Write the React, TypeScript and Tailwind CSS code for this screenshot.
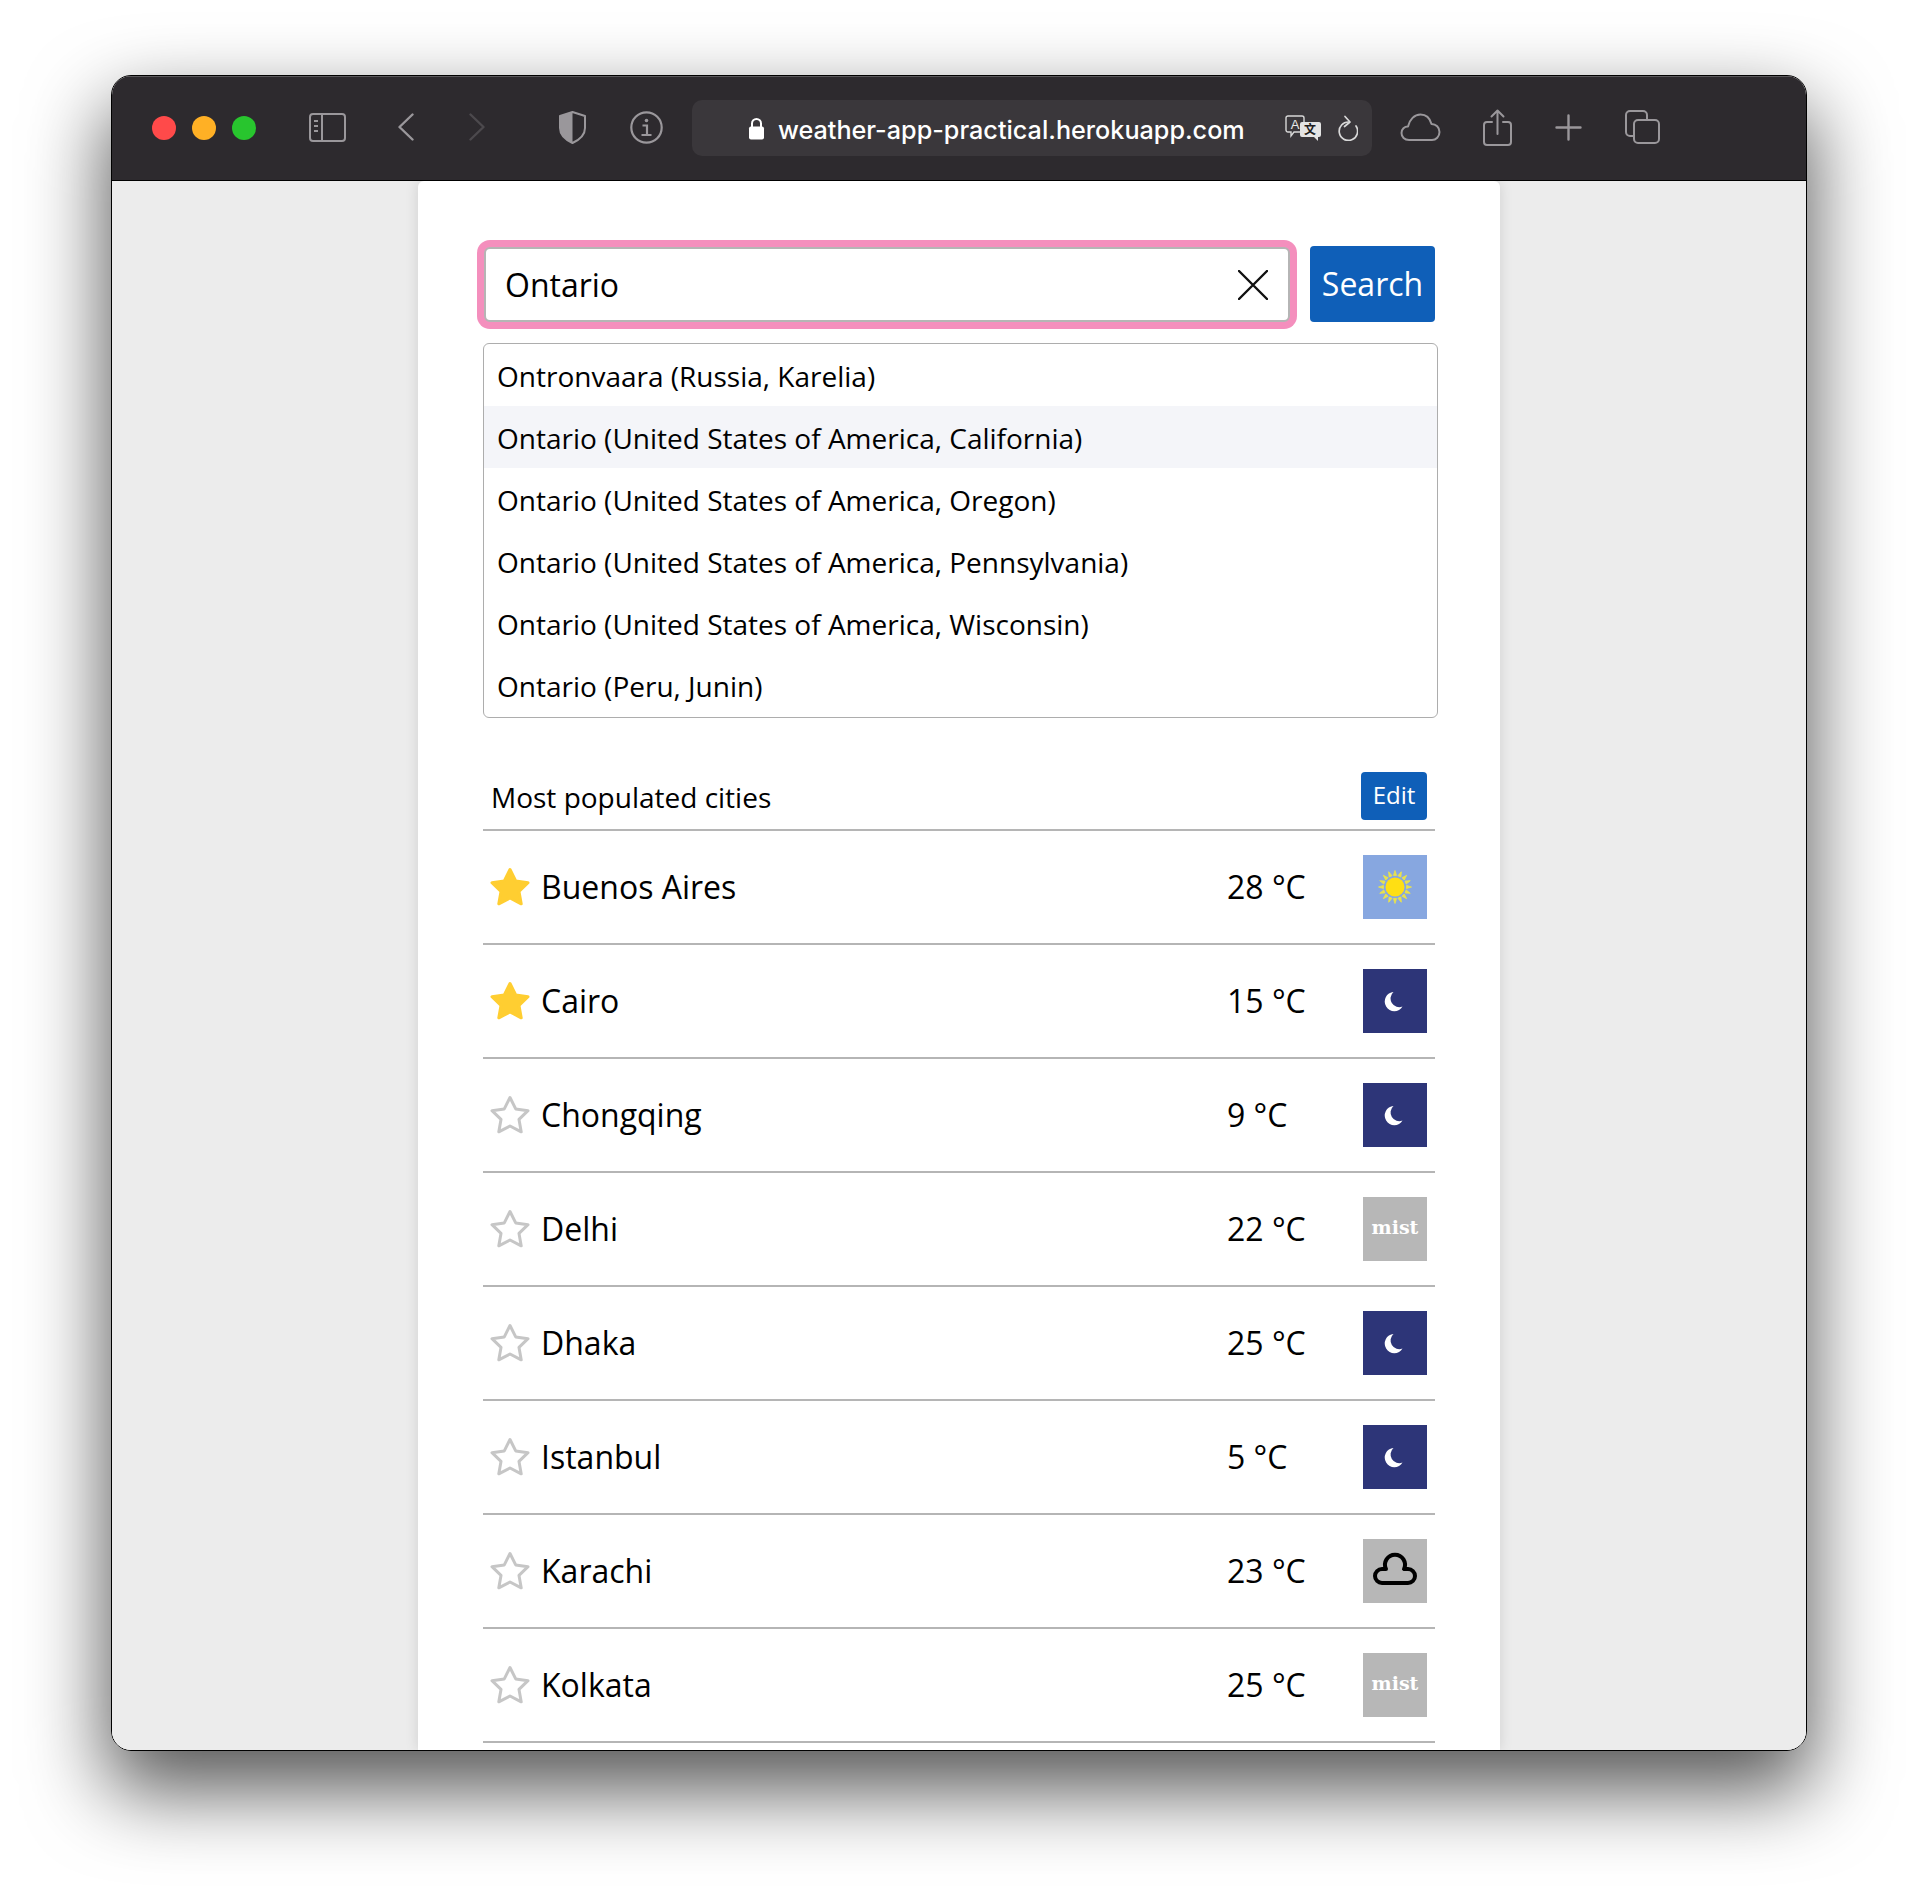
import React from "react";

const suggestions = [
  "Ontronvaara (Russia, Karelia)",
  "Ontario (United States of America, California)",
  "Ontario (United States of America, Oregon)",
  "Ontario (United States of America, Pennsylvania)",
  "Ontario (United States of America, Wisconsin)",
  "Ontario (Peru, Junin)",
];

type Weather = "sun" | "moon" | "mist" | "cloud";

interface City {
  name: string;
  temp: string;
  weather: Weather;
  starred: boolean;
}

const cities: City[] = [
  { name: "Buenos Aires", temp: "28 °C", weather: "sun", starred: true },
  { name: "Cairo", temp: "15 °C", weather: "moon", starred: true },
  { name: "Chongqing", temp: "9 °C", weather: "moon", starred: false },
  { name: "Delhi", temp: "22 °C", weather: "mist", starred: false },
  { name: "Dhaka", temp: "25 °C", weather: "moon", starred: false },
  { name: "Istanbul", temp: "5 °C", weather: "moon", starred: false },
  { name: "Karachi", temp: "23 °C", weather: "cloud", starred: false },
  { name: "Kolkata", temp: "25 °C", weather: "mist", starred: false },
];

const iconGray = "#9a979b";

const Star = ({ filled }: { filled: boolean }) => (
  <svg viewBox="0 0 40 40" className="w-[40px] h-[40px] shrink-0">
    <polygon
      points="20,2.5 25.7,13.9 38,15.7 29,24.4 31.2,36.8 20,31 8.8,36.8 11,24.4 2,15.7 14.3,13.9"
      fill={filled ? "#ffce31" : "none"}
      stroke={filled ? "#ffce31" : "#c6c6c6"}
      strokeWidth="3"
      strokeLinejoin="round"
    />
  </svg>
);

const rays = Array.from({ length: 16 }, (_, i) => (i * 360) / 16);

const WeatherIcon = ({ weather }: { weather: Weather }) => {
  if (weather === "sun") {
    return (
      <div className="w-16 h-16 shrink-0 bg-[#87a7e0]">
        <svg viewBox="0 0 64 64" className="w-16 h-16">
          {rays.map((r) => (
            <path
              key={r}
              d="M30.4 20.5 L33.6 20.5 L32 15.5 Z"
              fill="#e8e24c"
              stroke="#e8e24c"
              strokeWidth="0.8"
              transform={`rotate(${r} 32 32)`}
            />
          ))}
          <circle cx="32" cy="32" r="9.5" fill="#ffdf13" />
        </svg>
      </div>
    );
  }
  if (weather === "moon") {
    return (
      <div className="w-16 h-16 shrink-0 bg-[#2d3578]">
        <svg viewBox="0 0 64 64" className="w-16 h-16">
          <path
            d="M30.5 23 A9.6 9.6 0 1 0 39.5 37.6 A8.7 8.7 0 0 1 30.5 23 Z"
            fill="#ffffff"
          />
        </svg>
      </div>
    );
  }
  if (weather === "cloud") {
    return (
      <div className="w-16 h-16 shrink-0 bg-[#b7b7b7]">
        <svg viewBox="0 0 64 64" className="w-16 h-16">
          <path
            d="M19 44 a7 7 0 0 1 0-14 h4 a10 10 0 1 1 18 0 h4 a7 7 0 0 1 0 14 z"
            fill="none"
            stroke="#000000"
            strokeWidth="4"
            strokeLinejoin="round"
          />
        </svg>
      </div>
    );
  }
  return (
    <div className="w-16 h-16 shrink-0 bg-[#b7b7b7] flex items-center justify-center">
      <span className="font-['DejaVu_Serif',serif] font-bold text-[19px] leading-none text-white -mt-1">
        mist
      </span>
    </div>
  );
};

const TrafficLights = () => (
  <div className="flex gap-4 mt-[2px]">
    <div className="w-6 h-6 rounded-full bg-[#ff4a4a]" />
    <div className="w-6 h-6 rounded-full bg-[#ffb025]" />
    <div className="w-6 h-6 rounded-full bg-[#28c52e]" />
  </div>
);

const Toolbar = () => (
  <div className="h-[105px] shrink-0 flex items-center pl-[40px] pb-[2px] bg-[#2d2a2e] border-b border-black shadow-[inset_0_1px_0_#5a585b]">
    <TrafficLights />
    <svg viewBox="0 0 37 29" className="w-[37px] h-[29px] ml-[53px]" fill="none" stroke={iconGray} strokeWidth="2">
      <rect x="1" y="1" width="35" height="27" rx="3" />
      <path d="M13 1v27M5 8h4M5 13h4M5 18h4" />
    </svg>
    <svg viewBox="0 0 16 28" className="w-4 h-7 ml-[52px]" fill="none" stroke={iconGray} strokeWidth="2.4" strokeLinecap="round" strokeLinejoin="round">
      <path d="M14.5 1.5 L1.5 14 L14.5 26.5" />
    </svg>
    <svg viewBox="0 0 16 28" className="w-4 h-7 ml-[55px]" fill="none" stroke="#4c494d" strokeWidth="2.4" strokeLinecap="round" strokeLinejoin="round">
      <path d="M1.5 1.5 L14.5 14 L1.5 26.5" />
    </svg>
    <svg viewBox="0 0 27 33" className="w-[27px] h-[33px] ml-[74px]">
      <path d="M13.5 1 L26 5 V17 C26 24 20 29 13.5 32 C7 29 1 24 1 17 V5 Z" fill="none" stroke={iconGray} strokeWidth="2" strokeLinejoin="round" />
      <path d="M13.5 1 L1 5 V17 C1 24 7 29 13.5 32 Z" fill={iconGray} />
    </svg>
    <svg viewBox="0 0 33 33" className="w-[33px] h-[33px] ml-[44px]" fill="none" stroke={iconGray} strokeWidth="2.2">
      <circle cx="16.5" cy="16.5" r="15.2" />
      <circle cx="16.5" cy="9.5" r="1.8" fill={iconGray} stroke="none" />
      <path d="M12.5 14.5h4.5v9M11.5 24h10" />
    </svg>
    <div className="w-[680px] h-14 ml-[29px] mt-[2px] rounded-[10px] bg-[#3a373b] flex items-center relative">
      <svg viewBox="0 0 17 23" className="w-[17px] h-[23px] ml-[56px]">
        <path d="M4 10V6.5a4.5 4.5 0 0 1 9 0V10" fill="none" stroke="#ffffff" strokeWidth="2" />
        <rect x="1" y="9.5" width="15" height="13" rx="2" fill="#ffffff" />
      </svg>
      <span className="ml-[13px] mt-[5px] font-['Inter',sans-serif] font-medium text-[25.2px] leading-none text-white whitespace-nowrap">
        weather-app-practical.herokuapp.com
      </span>
      <svg viewBox="0 0 36 26" className="w-9 h-[26px] absolute left-[593px] top-[15px]">
        <path d="M3 1h14a2 2 0 0 1 2 2v12a2 2 0 0 1-2 2h-8l-3 4v-4H3a2 2 0 0 1-2-2V3a2 2 0 0 1 2-2z" fill="#3a373b" stroke="#d8d8d8" strokeWidth="1.4" />
        <text x="10" y="14" textAnchor="middle" fontSize="13" fill="#e8e8e8" fontFamily="Liberation Sans, sans-serif">A</text>
        <path d="M17 7h17a2 2 0 0 1 2 2v11a2 2 0 0 1-2 2h-1v4l-4-4h-12a2 2 0 0 1-2-2V9a2 2 0 0 1 2-2z" fill="#e4e4e4" />
        <text x="25" y="19" textAnchor="middle" fontSize="12" fontWeight="700" fill="#1f1d20" fontFamily="Noto Sans CJK SC, sans-serif">文</text>
      </svg>
      <svg viewBox="0 0 21 26" className="w-[21px] h-[26px] absolute left-[645px] top-[15px]" fill="none" stroke="#d8d8d8" strokeWidth="1.7" strokeLinecap="round" strokeLinejoin="round">
        <path d="M12 7 A9.2 9.2 0 1 0 19 11" />
        <path d="M8 1.5 L13 7 L7.5 11.5" />
      </svg>
    </div>
    <svg viewBox="0 0 41 28" className="w-[41px] h-7 ml-[28px]" fill="none" stroke={iconGray} strokeWidth="2" strokeLinejoin="round">
      <path d="M9 27 C4.5 27 1.5 24 1.5 20 C1.5 16 4.5 13.5 8 13.5 C9.5 6.5 14.5 1.5 20.5 1.5 C26.5 1.5 30 5.5 31.5 11 C36 11 39.5 14.5 39.5 19 C39.5 23.5 36 27 32 27 Z" />
    </svg>
    <svg viewBox="0 0 29 37" className="w-[29px] h-[37px] ml-[42px]" fill="none" stroke={iconGray} strokeWidth="2" strokeLinecap="round" strokeLinejoin="round">
      <path d="M9 13H4a3 3 0 0 0-3 3v17a3 3 0 0 0 3 3h21a3 3 0 0 0 3-3V16a3 3 0 0 0-3-3h-5" />
      <path d="M14.5 25V1.5M8.5 7.5l6-6 6 6" />
    </svg>
    <svg viewBox="0 0 27 27" className="w-[27px] h-[27px] ml-[43px]" fill="none" stroke={iconGray} strokeWidth="2.4" strokeLinecap="round">
      <path d="M13.5 1.5v24M1.5 13.5h24" />
    </svg>
    <svg viewBox="0 0 35 34" className="w-[35px] h-[34px] ml-[43px]" fill="none" stroke={iconGray} strokeWidth="2">
      <path d="M9 26H5a4 4 0 0 1-4-4V5a4 4 0 0 1 4-4h13a4 4 0 0 1 4 4v4" />
      <rect x="9" y="10" width="25" height="23" rx="4" />
    </svg>
  </div>
);

const SearchBar = () => (
  <div className="flex items-center">
    <div className="w-[806px] h-[75px] ml-px flex items-center rounded-md border-2 border-[#b5b5b5] ring-[7px] ring-[#f48fbd] pl-[19px] pr-5 pt-0.5 bg-white">
      <input
        readOnly
        value="Ontario"
        className="flex-1 min-w-0 outline-none text-[32px] text-black bg-transparent"
      />
      <svg viewBox="0 0 30 30" className="w-[30px] h-[30px] shrink-0" stroke="#111111" strokeWidth="2.4" strokeLinecap="round">
        <path d="M1 1l28 28M29 1L1 29" />
      </svg>
    </div>
    <button className="ml-[20px] w-[125px] h-[76px] rounded-[4px] bg-[#0f5fb8] text-white text-[32px]">
      Search
    </button>
  </div>
);

const Suggestions = () => (
  <div className="mt-[21px] -mr-[3px] pb-px border border-[#adadad] rounded-md overflow-hidden bg-white">
    {suggestions.map((s, i) => (
      <div
        key={s}
        className={`h-[62px] flex items-center pl-[13px] pt-0.5 text-[28px] text-black ${i === 1 ? "bg-[#f4f5f9]" : ""}`}
      >
        {s}
      </div>
    ))}
  </div>
);

const CityRow = ({ city }: { city: City }) => (
  <div className="h-[114px] shrink-0 flex items-center pl-[7px] pr-2 border-b-2 border-[#b5b5b5]">
    <Star filled={city.starred} />
    <div className="ml-[11px] flex-1 text-[32px] text-black">{city.name}</div>
    <div className="w-[136px] text-[32px] text-black">{city.temp}</div>
    <WeatherIcon weather={city.weather} />
  </div>
);

const App = () => {
  return (
    <div className="w-full h-[1898px] overflow-hidden bg-white pt-[75px] pl-[111px] font-['Open_Sans',sans-serif]">
      <div className="w-[1696px] h-[1676px] flex flex-col overflow-hidden rounded-[20px] border border-black relative shadow-[0_36px_80px_4px_rgba(0,0,0,0.66)]">
        <Toolbar />
        <div className="flex-1 min-h-0 bg-[#ececec] flex justify-center overflow-hidden">
          <div className="w-[1082px] bg-white rounded-t-md shadow-[0_0_14px_rgba(0,0,0,0.12)] pt-[65px] pl-[65px] pr-[65px]">
            <SearchBar />
            <Suggestions />
            <div className="mt-[54px] pb-[9px] pl-2 pr-2 flex items-center justify-between border-b-2 border-[#b5b5b5]">
              <span className="text-[28px] text-black pt-0.5">Most populated cities</span>
              <button className="w-[66px] h-12 pb-0.5 rounded-[4px] bg-[#0f5fb8] text-white text-[24px]">
                Edit
              </button>
            </div>
            {cities.map((c) => (
              <CityRow key={c.name} city={c} />
            ))}
          </div>
        </div>
      </div>
    </div>
  );
};

export default App;
